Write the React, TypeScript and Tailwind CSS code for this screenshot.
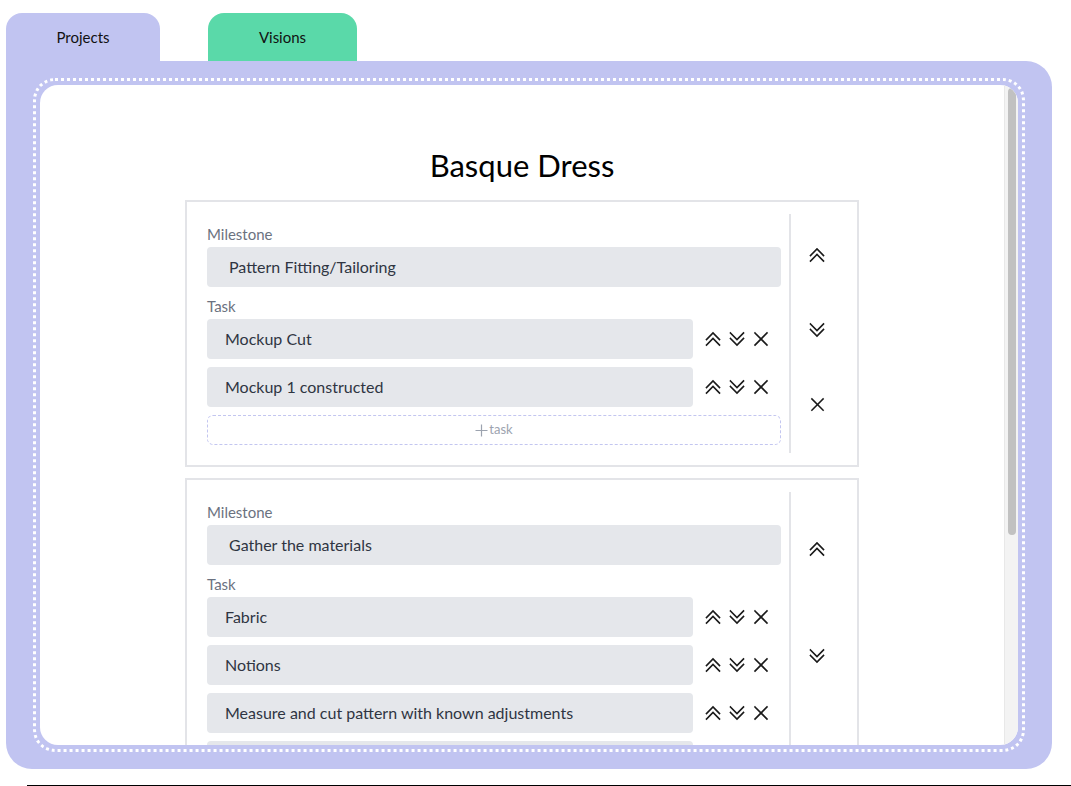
import React from "react";

type Milestone = {
  title: string;
  tasks: string[];
};

const milestones: Milestone[] = [
  { title: "Pattern Fitting/Tailoring", tasks: ["Mockup Cut", "Mockup 1 constructed"] },
  {
    title: "Gather the materials",
    tasks: ["Fabric", "Notions", "Measure and cut pattern with known adjustments", ""],
  },
];

const UpIcon = ({ size = 16 }: { size?: number }) => (
  <svg width={size} height={size} viewBox="0 0 16 16" fill="none" stroke="#1a1a1a" strokeWidth="1.6" strokeLinecap="square">
    <path d="M1.5 8.5 L8 2 L14.5 8.5" />
    <path d="M1.5 14 L8 7.5 L14.5 14" />
  </svg>
);

const DownIcon = ({ size = 16 }: { size?: number }) => (
  <svg width={size} height={size} viewBox="0 0 16 16" fill="none" stroke="#1a1a1a" strokeWidth="1.6" strokeLinecap="square">
    <path d="M1.5 2 L8 8.5 L14.5 2" />
    <path d="M1.5 7.5 L8 14 L14.5 7.5" />
  </svg>
);

const CloseIcon = ({ size = 16 }: { size?: number }) => (
  <svg width={size} height={size} viewBox="0 0 16 16" fill="none" stroke="#1a1a1a" strokeWidth="1.6" strokeLinecap="square">
    <path d="M2 2 L14 14" />
    <path d="M14 2 L2 14" />
  </svg>
);

const MilestoneCard = ({ m }: { m: Milestone }) => (
  <div className="w-[674px] mx-auto border-2 border-[#e3e4e8] bg-white flex pl-5 pr-[14px] py-3">
    {/* left: milestone + tasks */}
    <div className="flex-1 pt-[10px] pb-2">
      <div className="text-[15px] leading-5 text-[#6b7280]">Milestone</div>
      <div className="mt-[3px] h-10 rounded bg-[#e5e7eb] flex items-center pl-[22px] text-[16px] text-[#2f3542]">
        {m.title}
      </div>
      <div className="mt-[9px] text-[15px] leading-5 text-[#6b7280]">Task</div>
      <div className="mt-[3px] flex flex-col gap-2">
        {m.tasks.map((t, i) => (
          <div key={i} className="flex items-center">
            <div className="flex-1 h-10 rounded bg-[#e5e7eb] flex items-center pl-[18px] text-[16px] text-[#2f3542]">
              {t}
            </div>
            <div className="flex items-center gap-2 ml-3 mr-3">
              <UpIcon />
              <DownIcon />
              <CloseIcon size={16} />
            </div>
          </div>
        ))}
      </div>
      <div className="mt-2 h-[30px] rounded-md border border-dashed border-[#c3c6f0] flex items-center justify-center text-[13px] text-[#9ca3af]">
        <svg width="13" height="13" viewBox="0 0 13 13" fill="none" stroke="#9ca3af" strokeWidth="1.2">
          <path d="M6.5 0.5 V12.5 M0.5 6.5 H12.5" />
        </svg>
        <span className="ml-px">task</span>
      </div>
    </div>
    {/* right: milestone controls */}
    <div className="ml-2 w-[54px] border-l-2 border-[#e3e4e8] flex flex-col items-center justify-around pt-1 pb-3">
      <UpIcon />
      <DownIcon />
      <CloseIcon size={15} />
    </div>
  </div>
);

export default function App() {
  return (
    <div className="w-[1071px] h-[786px] overflow-hidden bg-white font-['Lato','Noto_Sans',sans-serif]">
      <div className="ml-[6px] mr-[19px] pt-[13px]">
        {/* tabs */}
        <div className="flex gap-12">
          <div className="w-[154px] h-12 rounded-t-2xl bg-[#c1c4f1] flex items-center justify-center text-[15px] text-[#111]">
            Projects
          </div>
          <div className="w-[149px] h-12 rounded-t-2xl bg-[#5ad9a9] flex items-center justify-center text-[15px] text-[#111]">
            Visions
          </div>
        </div>
        {/* panel */}
        <div className="h-[708px] bg-[#c1c4f1] rounded-b-[26px] rounded-tr-[26px] px-[27px] py-[17px]">
          <div className="h-full border-[3px] border-dotted border-white rounded-[22px] p-[4px]">
            <div className="h-full bg-white rounded-[18px] overflow-hidden flex">
              <div className="flex-1 overflow-hidden">
                <h1 className="mt-[62px] text-center text-[31px] leading-9 text-black">Basque Dress</h1>
                <div className="mt-[17px] flex flex-col gap-[11px]">
                  {milestones.map((m) => (
                    <MilestoneCard key={m.title} m={m} />
                  ))}
                </div>
              </div>
              {/* scrollbar */}
              <div className="w-[14px] bg-[#f3f3f3] border-l border-[#e8e8e8] flex justify-center pt-[3px]">
                <div className="w-2 h-[447px] rounded-full bg-[#c1c1c1]" />
              </div>
            </div>
          </div>
        </div>
      </div>
      <div className="mt-4 ml-[27px] border-t border-black" />
    </div>
  );
}
